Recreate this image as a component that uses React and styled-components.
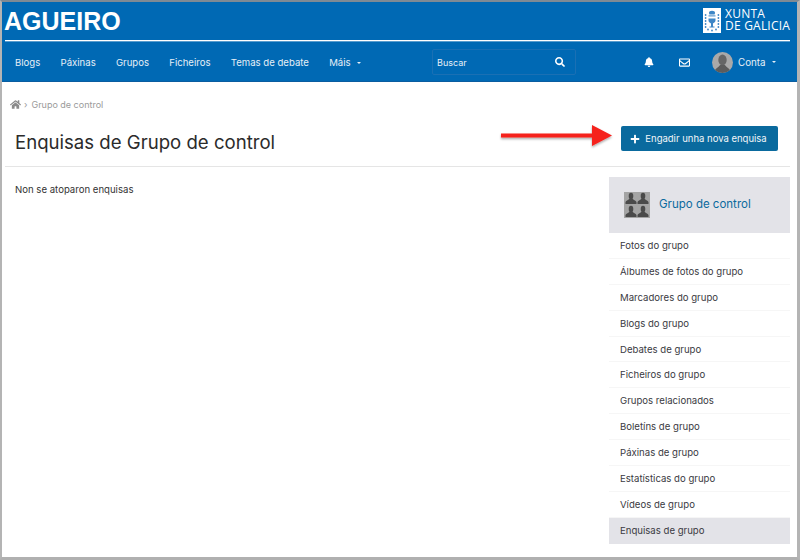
import React from 'react';
import styled, { createGlobalStyle } from 'styled-components';
import { FaHome, FaSearch, FaBell, FaRegEnvelope, FaPlus } from 'react-icons/fa';

const GlobalStyle = createGlobalStyle`
  html, body { margin: 0; padding: 0; background: #fff; }
  body { font-family: Inter, "Noto Sans", sans-serif; }
  * { box-sizing: border-box; }
`;

const Frame = styled.div`
  width: 800px;
  height: 560px;
  overflow: hidden;
  background: #fff;
  border-style: solid;
  border-color: #7f8a94 #b4b4b4 #b0b0b0 #b4b4b4;
  border-width: 2px 3px 3px 2px;
`;

const Header = styled.header`
  background: #0069b4;
  height: 80px;
  border-bottom: 1px solid #0a5da0;
  display: flex;
  flex-direction: column;
`;

const TopBar = styled.div`
  height: 39px;
  margin: 0 7px 0 3px;
  display: flex;
  align-items: center;
  justify-content: space-between;
  border-bottom: 1px solid #fff;
  box-shadow: 0 1px 0 rgba(255, 255, 255, 0.35);
`;

const SiteName = styled.div`
  font-family: "Liberation Sans", Arial, sans-serif;
  font-weight: 700;
  font-size: 25px;
  color: #fff;
  line-height: 1;
  margin-left: -1px;
`;

const Xunta = styled.div`
  display: flex;
  align-items: center;
  gap: 4px;
  color: #fff;
  padding-bottom: 2px;
`;

const XuntaBadge = styled.svg`
  width: 18px;
  height: 25px;
  display: block;
`;

const XuntaText = styled.div`
  font-family: "Open Sans", sans-serif;
  font-size: 12px;
  line-height: 12px;
  letter-spacing: 0.2px;
`;

const NavBar = styled.nav`
  flex: 1;
  display: flex;
  align-items: center;
  padding: 2px 0 0 13px;
`;

const NavLinks = styled.div`
  display: flex;
  gap: 20.2px;
  width: 417px;
`;

const NavLink = styled.a`
  color: #e6eff7;
  font-size: 9.6px;
  white-space: nowrap;
`;

const Caret = styled.span`
  display: inline-block;
  width: 0;
  height: 0;
  margin-left: 6px;
  vertical-align: 2px;
  border-left: 2px solid transparent;
  border-right: 2px solid transparent;
  border-top: 2px solid #e6eff7;
`;

const SearchBox = styled.div`
  width: 144px;
  height: 26px;
  border: 1px solid #1a70b4;
  border-radius: 2px;
  display: flex;
  align-items: center;
  justify-content: space-between;
  padding: 0 10px 0 4px;
  color: #e6eff7;
  font-size: 9px;
`;

const NavIcons = styled.div`
  display: flex;
  align-items: center;
  margin-left: 68px;
  color: #fff;
`;

const IconSlot = styled.span`
  display: flex;
  width: ${(p) => p.$width}px;
`;

const Avatar = styled.svg`
  width: 21px;
  height: 21px;
  border-radius: 50%;
  display: block;
`;

const AccountName = styled.span`
  color: #e6eff7;
  font-size: 9.8px;
  margin-left: 5px;
`;

const Page = styled.main`
  padding: 0 7px 0 3px;
`;

const Breadcrumb = styled.div`
  height: 44px;
  padding: 17px 0 0 5px;
  display: flex;
  align-items: flex-start;
  color: #9a9a9a;
  font-size: 9px;
  line-height: 12px;
`;

const Separator = styled.span`
  margin: 0 4px 0 3px;
`;

const TitleRow = styled.div`
  height: 41px;
  display: flex;
  align-items: flex-start;
  padding: 0 12px 0 10px;
  border-bottom: 1px solid #e5e5e5;
`;

const Title = styled.h1`
  flex: 1;
  margin: 2px 0 0;
  color: #2b2b2b;
  font-size: 18.6px;
  line-height: 28px;
  font-weight: 400;
`;

const Arrow = styled.svg`
  width: 111px;
  height: 22px;
  margin: -1px 9px 0 0;
  display: block;
  overflow: visible;
`;

const AddButton = styled.a`
  width: 157px;
  height: 25px;
  background: #0a6a9e;
  border-radius: 2px;
  color: #f2f6f9;
  font-size: 9.5px;
  display: flex;
  align-items: center;
  justify-content: center;
  gap: 5px;
  white-space: nowrap;
  padding-right: 2px;
`;

const Columns = styled.div`
  display: flex;
  justify-content: space-between;
  padding: 10px 0 0 10px;
`;

const EmptyText = styled.p`
  margin: 6px 0 0;
  color: #333;
  font-size: 9.6px;
  line-height: 14px;
`;

const Sidebar = styled.aside`
  width: 181px;
`;

const GroupHead = styled.div`
  height: 56px;
  background: #e3e3e8;
  display: flex;
  align-items: center;
  padding-left: 15px;
  gap: 9px;
`;

const GroupIcon = styled.svg`
  width: 26px;
  height: 26px;
  display: block;
`;

const GroupName = styled.a`
  color: #0a6a9e;
  font-size: 11.5px;
  padding-bottom: 2px;
`;

const MenuItem = styled.div`
  height: 25.9px;
  display: flex;
  align-items: center;
  padding-left: 11px;
  font-size: 9.6px;
  color: #3a3a42;
  background: ${(p) => (p.$active ? '#e3e3e8' : '#fff')};
  border-bottom: 1px solid ${(p) => (p.$active ? '#e3e3e8' : '#f6f6f6')};
`;

const navItems = ['Blogs', 'Páxinas', 'Grupos', 'Ficheiros', 'Temas de debate'];
const menuItems = [
  'Fotos do grupo',
  'Álbumes de fotos do grupo',
  'Marcadores do grupo',
  'Blogs do grupo',
  'Debates de grupo',
  'Ficheiros do grupo',
  'Grupos relacionados',
  'Boletíns de grupo',
  'Páxinas de grupo',
  'Estatísticas do grupo',
  'Vídeos de grupo',
  'Enquisas de grupo',
];

const Person = ({ x, y }) => (
  <g fill="#4a4a4a" transform={`translate(${x} ${y})`}>
    <ellipse cx="5.5" cy="3.4" rx="2.3" ry="3.2" />
    <path d="M0 11.5 V9.5 C0.5 8 3.4 7.8 4 6 L7 6 C7.6 7.8 10.5 8 11 9.5 V11.5 Z" />
  </g>
);

const XuntaLogo = () => (
  <XuntaBadge viewBox="0 0 18 25">
    <rect width="18" height="25" fill="#fff" />
    <g fill="#3d86c6">
      <path d="M6 5 C5.5 2 12.5 2 12 5 L11.6 6.5 H6.4 Z" />
      <rect x="5.5" y="7.4" width="7" height="1" />
      <path d="M5.5 10.5 H12.5 V12.5 C12.5 14.5 10.5 14.8 10 15.5 V18.5 H11.5 V19.6 H6.5 V18.5 H8 V15.5 C7.5 14.8 5.5 14.5 5.5 12.5 Z" />
      {[7, 10, 13, 16, 19].map((y) => (
        <g key={y}>
          <circle cx="2.6" cy={y} r="0.9" />
          <circle cx="15.4" cy={y} r="0.9" />
        </g>
      ))}
      <circle cx="5" cy="21.5" r="0.9" />
      <circle cx="13" cy="21.5" r="0.9" />
      <circle cx="9" cy="22.5" r="0.9" />
    </g>
  </XuntaBadge>
);

export default function App() {
  return (
    <>
      <GlobalStyle />
      <Frame>
        <Header>
          <TopBar>
            <SiteName>AGUEIRO</SiteName>
            <Xunta>
              <XuntaLogo />
              <XuntaText>
                XUNTA
                <br />
                DE GALICIA
              </XuntaText>
            </Xunta>
          </TopBar>
          <NavBar>
            <NavLinks>
              {navItems.map((item) => (
                <NavLink key={item}>{item}</NavLink>
              ))}
              <NavLink>
                Máis
                <Caret />
              </NavLink>
            </NavLinks>
            <SearchBox>
              Buscar
              <FaSearch size={10} color="#fff" />
            </SearchBox>
            <NavIcons>
              <IconSlot $width={35}>
                <FaBell size={10} />
              </IconSlot>
              <IconSlot $width={33}>
                <FaRegEnvelope size={11} />
              </IconSlot>
              <Avatar viewBox="0 0 21 21">
                <rect width="21" height="21" fill="#a9a9a9" />
                <ellipse cx="10.5" cy="8" rx="4.2" ry="5.4" fill="#666" />
                <path d="M2 21 C3 15.5 7 15.5 8 13 H13 C14 15.5 18 15.5 19 21 Z" fill="#5c5c5c" />
              </Avatar>
              <AccountName>Conta</AccountName>
              <Caret />
            </NavIcons>
          </NavBar>
        </Header>
        <Page>
          <Breadcrumb>
            <FaHome size={11} color="#8a8a8a" />
            <Separator>›</Separator>
            Grupo de control
          </Breadcrumb>
          <TitleRow>
            <Title>Enquisas de Grupo de control</Title>
            <Arrow viewBox="0 0 111 22">
              <defs>
                <filter id="arrowShadow" x="-10%" y="-50%" width="120%" height="220%">
                  <feDropShadow dx="0" dy="1.5" stdDeviation="1.2" floodColor="#000" floodOpacity="0.35" />
                </filter>
              </defs>
              <path
                d="M0 8.5 H91 V0 L111 10.5 L91 21 V12.5 H0 Z"
                fill="#f5201c"
                filter="url(#arrowShadow)"
              />
            </Arrow>
            <AddButton>
              <FaPlus size={10} color="#fff" />
              Engadir unha nova enquisa
            </AddButton>
          </TitleRow>
          <Columns>
            <EmptyText>Non se atoparon enquisas</EmptyText>
            <Sidebar>
              <GroupHead>
                <GroupIcon viewBox="0 0 26 26">
                  <rect width="26" height="26" fill="#a4a4a4" />
                  <Person x={1.5} y={0.5} />
                  <Person x={13.5} y={0.5} />
                  <Person x={1.5} y={13.5} />
                  <Person x={13.5} y={13.5} />
                </GroupIcon>
                <GroupName>Grupo de control</GroupName>
              </GroupHead>
              {menuItems.map((item) => (
                <MenuItem key={item} $active={item === 'Enquisas de grupo'}>
                  {item}
                </MenuItem>
              ))}
            </Sidebar>
          </Columns>
        </Page>
      </Frame>
    </>
  );
}
